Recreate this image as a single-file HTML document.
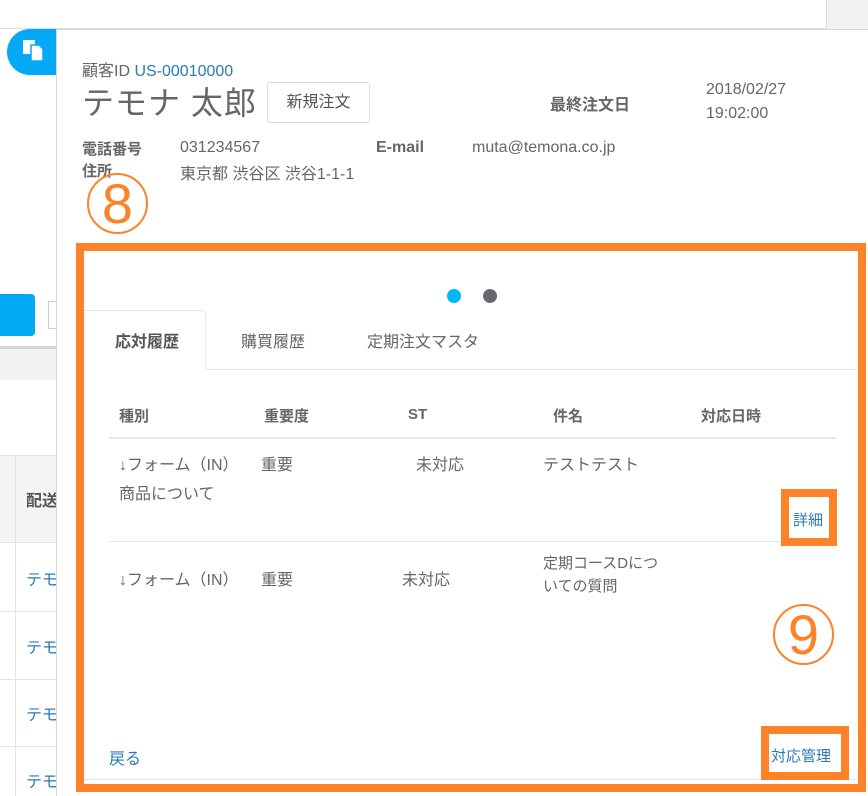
<!DOCTYPE html>
<html><head><meta charset="utf-8"><style>
*{box-sizing:border-box;margin:0;padding:0}
body{width:868px;height:796px;position:relative;overflow:hidden;background:#fff;font-family:"Liberation Sans","Noto Sans CJK JP",sans-serif;color:#555}
.a{position:absolute;white-space:nowrap}
.b{font-weight:bold}
.blue{color:#2a7ab8}
.circ{position:absolute;border:2px solid #fd8228;border-radius:50%;color:#fd8228;text-align:center;font-size:56px;line-height:57px}
</style></head><body>
<div class="a" style="left:0;top:0;width:868px;height:29px;background:#fff;border-bottom:1px solid #ddd"></div>
<div class="a" style="left:826px;top:0;width:42px;height:29px;background:#f2f2f2;border-left:1px solid #ddd"></div>
<div class="a" style="left:7px;top:29px;width:50px;height:46px;background:#03a9f4;border-radius:23px 0 0 23px"></div>
<svg class="a" style="left:22px;top:39px" width="24" height="24" viewBox="0 0 24 24"><rect x="1" y="1" width="12" height="14" fill="#fff"/><path d="M9 6h8l4 4v12H9z" fill="#fff" stroke="#03a9f4" stroke-width="1.5"/></svg>
<div class="a" style="left:0;top:294px;width:35px;height:42px;background:#03a9f4;border-radius:0 4px 4px 0"></div>
<div class="a" style="left:48px;top:301px;width:10px;height:28px;border:1px solid #ccc"></div>
<div class="a" style="left:0;top:346px;width:56px;height:3px;background:#bbb;opacity:.6"></div>
<div class="a" style="left:0;top:349px;width:56px;height:31px;background:#f2f2f2"></div>
<div class="a" style="left:0;top:455px;width:56px;height:88px;background:#f4f4f4;border-top:1px solid #e3e3e3;border-bottom:1px solid #e3e3e3"></div>
<div class="a" style="left:15px;top:456px;width:1px;height:340px;background:#e3e3e3"></div>
<div class="a b" style="left:26px;top:487px;font-size:16px;color:#555">配送</div>
<div class="a" style="left:0;top:611px;width:56px;height:1px;background:#e3e3e3"></div>
<div class="a" style="left:0;top:679px;width:56px;height:1px;background:#e3e3e3"></div>
<div class="a" style="left:0;top:746px;width:56px;height:1px;background:#e3e3e3"></div>
<div class="a blue" style="left:26px;top:566px;font-size:16px">テモ</div>
<div class="a blue" style="left:26px;top:634px;font-size:16px">テモ</div>
<div class="a blue" style="left:26px;top:701px;font-size:16px">テモ</div>
<div class="a blue" style="left:26px;top:768px;font-size:16px">テモ</div>
<div class="a" style="left:56px;top:29px;width:812px;height:767px;background:#fff;border-left:1px solid #d6d6d6;border-top:1px solid #d6d6d6"></div>
<div class="a" style="left:82px;top:57px;font-size:16px;color:#666">顧客ID <span class="blue">US-00010000</span></div>
<div class="a" style="left:82px;top:78px;font-size:32px;color:#666;letter-spacing:1px">テモナ 太郎</div>
<div class="a" style="left:267px;top:82px;width:103px;height:41px;border:1px solid #ddd;border-radius:3px;font-size:16px;color:#555;text-align:center;line-height:39px">新規注文</div>
<div class="a b" style="left:550px;top:91px;font-size:16px;color:#666">最終注文日</div>
<div class="a" style="left:706px;top:78px;font-size:16px;color:#666;line-height:24px">2018/02/27<br>19:02:00</div>
<div class="a b" style="left:82px;top:138px;font-size:15px;color:#666">電話番号</div>
<div class="a" style="left:180px;top:139px;font-size:16px;color:#666">031234567</div>
<div class="a b" style="left:376px;top:139px;font-size:16px;color:#666">E-mail</div>
<div class="a" style="left:472px;top:139px;font-size:16px;color:#666">muta@temona.co.jp</div>
<div class="a b" style="left:82px;top:160px;font-size:15px;color:#666">住所</div>
<div class="a" style="left:180px;top:160px;font-size:16px;color:#666">東京都 渋谷区 渋谷1-1-1</div>
<div class="circ" style="left:87px;top:173px;width:61px;height:61px">8</div>
<div class="a" style="left:76px;top:243px;width:790px;height:549px;border:8px solid #fd8228"></div>
<div class="a" style="left:447px;top:289px;width:14px;height:14px;border-radius:50%;background:#00b9f7"></div>
<div class="a" style="left:483px;top:289px;width:14px;height:14px;border-radius:50%;background:#666a6e"></div>
<div class="a" style="left:84px;top:369px;width:773px;height:1px;background:#e8e8e8"></div>
<div class="a" style="left:84px;top:310px;width:122px;height:60px;background:#fff;border:1px solid #e8e8e8;border-bottom:none;border-left:none;border-radius:0 4px 0 0"></div>
<div class="a b" style="left:115px;top:328px;font-size:16px;color:#555">応対履歴</div>
<div class="a" style="left:241px;top:328px;font-size:16px;color:#666">購買履歴</div>
<div class="a" style="left:367px;top:328px;font-size:16px;color:#666">定期注文マスタ</div>
<div class="a b" style="left:119px;top:405px;font-size:15px;color:#666">種別</div>
<div class="a b" style="left:264px;top:405px;font-size:15px;color:#666">重要度</div>
<div class="a b" style="left:408px;top:406px;font-size:15px;color:#666">ST</div>
<div class="a b" style="left:553px;top:405px;font-size:15px;color:#666">件名</div>
<div class="a b" style="left:701px;top:405px;font-size:15px;color:#666">対応日時</div>
<div class="a" style="left:109px;top:437px;width:727px;height:2px;background:#e6e6e6"></div>
<div class="a" style="left:119px;top:451px;font-size:16px;color:#666">↓フォーム（IN）</div>
<div class="a" style="left:261px;top:451px;font-size:16px;color:#666">重要</div>
<div class="a" style="left:416px;top:451px;font-size:16px;color:#666">未対応</div>
<div class="a" style="left:543px;top:451px;font-size:16px;color:#666">テストテスト</div>
<div class="a" style="left:119px;top:480px;font-size:16px;color:#666">商品について</div>
<div class="a" style="left:109px;top:541px;width:727px;height:1px;background:#e6e6e6"></div>
<div class="a" style="left:781px;top:489px;width:56px;height:57px;border:8px solid #fd8228;background:#fff"></div>
<div class="a blue" style="left:793px;top:509px;font-size:15px">詳細</div>
<div class="a" style="left:119px;top:566px;font-size:16px;color:#666">↓フォーム（IN）</div>
<div class="a" style="left:261px;top:566px;font-size:16px;color:#666">重要</div>
<div class="a" style="left:402px;top:566px;font-size:16px;color:#666">未対応</div>
<div class="a" style="left:543px;top:552px;font-size:15px;color:#666;line-height:23px">定期コースDにつ<br>いての質問</div>
<div class="circ" style="left:773px;top:604px;width:61px;height:61px">9</div>
<div class="a blue" style="left:109px;top:745px;font-size:16px">戻る</div>
<div class="a" style="left:84px;top:779px;width:773px;height:1px;background:#e6e6e6"></div>
<div class="a" style="left:761px;top:726px;width:88px;height:54px;border:8px solid #fd8228;background:#fff"></div>
<div class="a blue" style="left:771px;top:745px;font-size:15px">対応管理</div>
</body></html>
